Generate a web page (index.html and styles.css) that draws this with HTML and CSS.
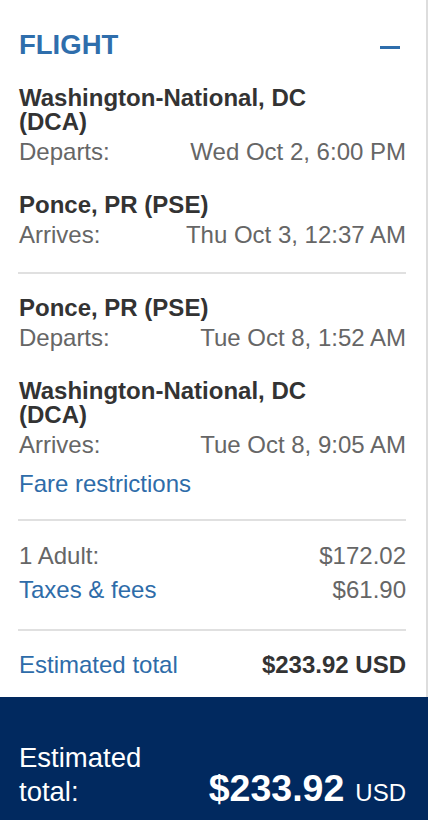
FILE: index.html
```html
<!DOCTYPE html>
<html lang="en">
<head>
<meta charset="utf-8">
<meta name="viewport" content="width=device-width, initial-scale=1">
<title>Flight summary</title>
<link rel="stylesheet" href="styles.css">
</head>
<body>
<div class="panel">
  <section class="summary">
    <header class="head">
      <h2 class="title">FLIGHT</h2>
      <button class="toggle" type="button" aria-label="Collapse"><span class="minus"></span></button>
    </header>

    <div class="leg">
      <div class="stop">
        <div class="place">Washington-National, DC (DCA)</div>
        <div class="row"><span class="label">Departs:</span><span class="val">Wed Oct 2, 6:00 PM</span></div>
      </div>
      <div class="stop">
        <div class="place">Ponce, PR (PSE)</div>
        <div class="row"><span class="label">Arrives:</span><span class="val">Thu Oct 3, 12:37 AM</span></div>
      </div>
    </div>

    <div class="leg leg-return">
      <div class="stop">
        <div class="place">Ponce, PR (PSE)</div>
        <div class="row"><span class="label">Departs:</span><span class="val">Tue Oct 8, 1:52 AM</span></div>
      </div>
      <div class="stop">
        <div class="place">Washington-National, DC (DCA)</div>
        <div class="row"><span class="label">Arrives:</span><span class="val">Tue Oct 8, 9:05 AM</span></div>
      </div>
      <a class="link fare" href="#">Fare restrictions</a>
    </div>

    <div class="prices">
      <div class="price-row"><span class="label">1 Adult:</span><span class="val">$172.02</span></div>
      <div class="price-row"><a class="link" href="#">Taxes &amp; fees</a><span class="val">$61.90</span></div>
    </div>

    <div class="total-row">
      <a class="link" href="#">Estimated total</a>
      <span class="total-val">$233.92 USD</span>
    </div>
  </section>

  <footer class="bar">
    <div class="bar-label">Estimated total:</div>
    <div class="bar-price"><span class="amount">$233.92</span><span class="cur">USD</span></div>
  </footer>
</div>
</body>
</html>
```

FILE: styles.css
```css
* { box-sizing: border-box; }

html, body {
  margin: 0;
  padding: 0;
  background: #ffffff;
}

body {
  font-family: "Liberation Sans", Arial, sans-serif;
  font-size: 24px;
  color: #333333;
}

.panel {
  width: 428px;
  min-height: 820px;
  display: flex;
  flex-direction: column;
}

.summary {
  padding: 30px 20px 0 18px;
  border-right: 2px solid #dddddd;
}

.head {
  display: flex;
  justify-content: space-between;
  align-items: center;
  height: 30px;
}

.title {
  margin: 0 0 0 1px;
  font-size: 27.5px;
  line-height: 30px;
  font-weight: bold;
  color: #2f6eac;
}

.toggle {
  border: 0;
  background: none;
  padding: 0;
  margin: 5px 6px 0 0;
  width: 20px;
  height: 3px;
  display: flex;
  cursor: pointer;
}

.minus {
  display: block;
  width: 20px;
  height: 3px;
  background: #2f6eac;
}

.leg {
  margin-top: 26px;
  padding-bottom: 23px;
  border-bottom: 2px solid #e0e0e0;
  display: flex;
  flex-direction: column;
}

.leg-return {
  margin-top: 0;
  padding-top: 22px;
  padding-bottom: 21px;
}

.stop + .stop {
  margin-top: 27px;
}

.place {
  font-weight: bold;
  line-height: 24px;
  max-width: 320px;
  padding-left: 1px;
  color: #333333;
}

.row {
  margin-top: 4px;
  display: flex;
  justify-content: space-between;
  line-height: 28px;
}

.label,
.val {
  color: #666666;
}

.label { padding-left: 1px; }

.link {
  color: #2e6ca9;
  text-decoration: none;
  padding-left: 1px;
}

.fare {
  margin-top: 11px;
  line-height: 28px;
  align-self: flex-start;
}

.prices {
  padding: 18px 0 22px;
  border-bottom: 2px solid #e0e0e0;
}

.price-row {
  display: flex;
  justify-content: space-between;
  line-height: 34px;
}

.total-row {
  display: flex;
  justify-content: space-between;
  line-height: 28px;
  padding: 20px 0 18px;
}

.total-val {
  font-weight: bold;
  color: #333333;
}

.bar {
  flex: 1;
  background: #01295f;
  color: #ffffff;
  padding: 44px 22px 12px 19px;
  display: flex;
  justify-content: space-between;
  align-items: last baseline;
}

.bar-label {
  width: 150px;
  font-size: 27.5px;
  line-height: 34px;
}

.bar-price {
  display: flex;
  align-items: baseline;
}

.amount {
  font-size: 37.5px;
  font-weight: bold;
  line-height: 34px;
}

.cur {
  font-size: 24px;
  margin-left: 11px;
}
```
